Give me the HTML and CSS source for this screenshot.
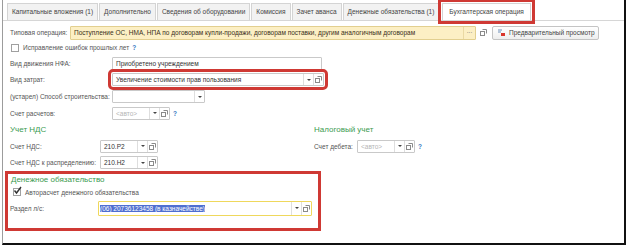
FILE: index.html
```html
<!doctype html>
<html>
  <head>
    <meta charset="UTF-8" />
    <title>Бухгалтерская операция</title>
    <link rel="stylesheet" href="styles.css">
  </head>

  <body>
    <div class="window">
      <div class="tabs">
        <div class="tab">Капитальные вложения (1)</div>
        <div class="tab">Дополнительно</div>
        <div class="tab">Сведения об оборудовании</div>
        <div class="tab">Комиссия</div>
        <div class="tab">Зачет аванса</div>
        <div class="tab">Денежные обязательства (1)</div>
        <div class="tab active">Бухгалтерская операция</div>
      </div>

      <div class="form">
        <div class="row row-op">
          <span class="label label-op">Типовая операция:</span>
          <div class="field field-yellow field-op">
            <span class="value">Поступление ОС, НМА, НПА по договорам купли-продажи, договорам поставки, другим аналогичным договорам</span>
            <span class="btn dots">...</span>
          </div>
          <span class="open-btn">
            <svg width="7" height="7" viewBox="0 0 7 7"><rect x="0.5" y="2.5" width="4" height="4" fill="none" stroke="#8a8a8a"/><path d="M2.5 0.5h4v4" fill="none" stroke="#8a8a8a"/></svg>
          </span>
          <button class="preview">
            <svg width="9" height="8" viewBox="0 0 9 8"><path d="M1 1h4M1 3h3" stroke="#6f8fb8" stroke-width="1"/><rect x="4" y="4" width="4" height="3" fill="#d9352b"/></svg>
            Предварительный просмотр
          </button>
        </div>

        <div class="row row-check">
          <span class="checkbox"></span>
          <span class="check-label">Исправление ошибок прошлых лет</span>
          <span class="help">?</span>
        </div>

        <div class="row row-3">
          <span class="label label-wide">Вид движения НФА:</span>
          <div class="field field-nfa">
            <span class="value">Приобретено учреждением</span>
          </div>
        </div>

        <div class="row row-4">
          <span class="label label-wide">Вид затрат:</span>
          <div class="field field-cost">
            <span class="value">Увеличение стоимости прав пользования</span>
            <span class="btn"><i class="arrow"></i></span>
            <span class="btn"><svg width="7" height="7" viewBox="0 0 7 7"><rect x="0.5" y="2.5" width="4" height="4" fill="none" stroke="#8a8a8a"/><path d="M2.5 0.5h4v4" fill="none" stroke="#8a8a8a"/></svg></span>
          </div>
        </div>

        <div class="row row-5">
          <span class="label label-wide">(устарел) Способ строительства:</span>
          <div class="field field-build">
            <span class="value"></span>
            <span class="btn"><i class="arrow"></i></span>
          </div>
        </div>

        <div class="row row-6">
          <span class="label label-wide">Счет расчетов:</span>
          <div class="field field-short">
            <span class="value placeholder">&lt;авто&gt;</span>
            <span class="btn"><i class="arrow"></i></span>
            <span class="btn"><svg width="7" height="7" viewBox="0 0 7 7"><rect x="0.5" y="2.5" width="4" height="4" fill="none" stroke="#8a8a8a"/><path d="M2.5 0.5h4v4" fill="none" stroke="#8a8a8a"/></svg></span>
          </div>
          <span class="help">?</span>
        </div>

        <div class="columns">
          <div class="column column-vat">
            <h3 class="group-title">Учет НДС</h3>
            <div class="row row-8">
              <span class="label label-vat">Счет НДС:</span>
              <div class="field field-short">
                <span class="value">210.Р2</span>
                <span class="btn"><i class="arrow"></i></span>
                <span class="btn"><svg width="7" height="7" viewBox="0 0 7 7"><rect x="0.5" y="2.5" width="4" height="4" fill="none" stroke="#8a8a8a"/><path d="M2.5 0.5h4v4" fill="none" stroke="#8a8a8a"/></svg></span>
              </div>
            </div>
            <div class="row row-9">
              <span class="label label-vat">Счет НДС к распределению:</span>
              <div class="field field-short">
                <span class="value">210.Н2</span>
                <span class="btn"><i class="arrow"></i></span>
                <span class="btn"><svg width="7" height="7" viewBox="0 0 7 7"><rect x="0.5" y="2.5" width="4" height="4" fill="none" stroke="#8a8a8a"/><path d="M2.5 0.5h4v4" fill="none" stroke="#8a8a8a"/></svg></span>
              </div>
            </div>
          </div>

          <div class="column column-tax">
            <h3 class="group-title">Налоговый учет</h3>
            <div class="row row-8">
              <span class="label label-tax">Счет дебета:</span>
              <div class="field field-short">
                <span class="value placeholder">&lt;авто&gt;</span>
                <span class="btn"><i class="arrow"></i></span>
                <span class="btn"><svg width="7" height="7" viewBox="0 0 7 7"><rect x="0.5" y="2.5" width="4" height="4" fill="none" stroke="#8a8a8a"/><path d="M2.5 0.5h4v4" fill="none" stroke="#8a8a8a"/></svg></span>
              </div>
              <span class="help">?</span>
            </div>
          </div>
        </div>

        <div class="money">
          <h3 class="group-title">Денежное обязательство</h3>
          <div class="row row-auto">
            <span class="checkbox checked">
              <svg width="9" height="9" viewBox="0 0 9 9"><path d="M1.5 4.5l2 2.5 4.5-6" fill="none" stroke="#333" stroke-width="1.4"/></svg>
            </span>
            <span class="check-label">Авторасчет денежного обязательства</span>
          </div>
          <div class="row row-section">
            <span class="label label-section">Раздел л/с:</span>
            <div class="field field-section">
              <span class="value"><span class="selected">(06) 20736123458 (в казначействе)</span></span>
              <span class="btn"><i class="arrow"></i></span>
              <span class="btn"><svg width="7" height="7" viewBox="0 0 7 7"><rect x="0.5" y="2.5" width="4" height="4" fill="none" stroke="#8a8a8a"/><path d="M2.5 0.5h4v4" fill="none" stroke="#8a8a8a"/></svg></span>
            </div>
          </div>
        </div>
      </div>
    </div>
  </body>
</html>
```

FILE: styles.css
```css
*,
*::before,
*::after {
  margin: 0;
  padding: 0;
  box-sizing: border-box;
}

body {
  width: 626px;
  height: 245px;
  overflow: hidden;
  background: #fff;
  font-family: "Liberation Sans", Arial, sans-serif;
  font-size: 6.5px;
  color: #555;
}

.window {
  margin-left: 2px;
  width: 624px;
  height: 245px;
  border-left: 1px solid #9c9c9c;
  border-right: 2px solid #111;
  border-bottom: 2px solid #111;
}

/* tabs */

.tabs {
  display: flex;
  gap: 1px;
  height: 21px;
  padding: 3px 0 0 4px;
  border-bottom: 1px solid #d6d6d6;
}

.tab {
  height: 17px;
  line-height: 16px;
  padding: 0 4px;
  border: 1px solid #d4d4d4;
  border-bottom: none;
  background: #f2f2f2;
  color: #444;
  white-space: nowrap;
}

.tab.active {
  margin-left: 2px;
  padding: 0 6px;
  background: #fff;
  outline: 3px solid #cf3934;
  outline-offset: 1px;
}

/* form */

.form {
  padding: 4px 0 0 7px;
}

.row {
  display: flex;
  align-items: center;
  white-space: nowrap;
}

.row-op { height: 15px; }
.row-check { height: 15px; }
.row-3 { height: 16px; }
.row-4 { height: 17px; }
.row-5 { height: 17px; }
.row-6 { height: 16px; }
.row-8 { height: 16px; }
.row-9 { height: 17px; }

.label {
  flex: none;
  color: #555;
}

.label-op { width: 60px; }
.label-wide { width: 102px; }
.label-vat { width: 90px; }
.label-tax { width: 43px; }
.label-section { width: 88px; }

.field {
  display: flex;
  height: 13px;
  border: 1px solid #c9c9c9;
  border-radius: 1px;
  background: #fff;
}

.field .value {
  flex: 1;
  overflow: hidden;
  padding: 0 3px;
  line-height: 11px;
  color: #333;
}

.field .placeholder {
  color: #b5b5b5;
}

.field .btn {
  display: flex;
  align-items: center;
  justify-content: center;
  width: 10px;
  border-left: 1px solid #dedede;
}

.arrow {
  width: 0;
  height: 0;
  border-left: 2px solid transparent;
  border-right: 2px solid transparent;
  border-top: 2px solid #444;
}

.field-yellow {
  background: #fcefc4;
  border-color: #e2cf8f;
}

.field-op {
  width: 406px;
  height: 14px;
}

.field-op .value {
  line-height: 12px;
  color: #3a3020;
}

.field-op .dots {
  width: 12px;
  border-left-color: #ead9a3;
  color: #777;
  align-items: flex-start;
  line-height: 8px;
}

.open-btn {
  display: flex;
  align-items: center;
  justify-content: center;
  width: 12px;
  height: 14px;
  margin-left: 1px;
}

.preview {
  display: flex;
  align-items: center;
  gap: 3px;
  height: 14px;
  margin-left: 3px;
  padding: 0 3px 0 4px;
  border: 1px solid #c4c4c4;
  border-radius: 2px;
  background: linear-gradient(#ffffff, #eeeeee);
  font: inherit;
  color: #444;
}

.checkbox {
  position: relative;
  flex: none;
  width: 8px;
  height: 8px;
  margin: 0 4px 0 1px;
  border: 1px solid #a0a0a0;
  background: #fff;
}

.checkbox.checked svg {
  position: absolute;
  left: -1px;
  top: -3px;
}

.check-label {
  color: #555;
}

.help {
  margin-left: 3px;
  color: #3a78c2;
  font-weight: bold;
}

.field-nfa { width: 210px; }

.field-cost {
  width: 212px;
  outline: 3px solid #cf3934;
  outline-offset: 1px;
}

.field-build { width: 93px; }

.field-short { width: 58px; }

.columns {
  display: flex;
}

.column-vat { width: 304px; }

.group-title {
  height: 17px;
  line-height: 17px;
  font-size: 8px;
  font-weight: normal;
  color: #3b9b50;
}

/* red-framed block */

.money {
  width: 316px;
  height: 60px;
  margin-left: -5px;
  padding: 0 0 0 2px;
  border: 3px solid #cf3934;
}

.money .group-title {
  height: 12px;
  line-height: 12px;
  padding-left: 1px;
}

.row-auto { height: 12px; }

.row-auto .checkbox { margin-left: 3px; }

.row-section { height: 20px; }

.field-section {
  width: 214px;
  height: 15px;
  border-color: #efd85c;
}

.field-section .value {
  padding: 0 1px;
  line-height: 13px;
}

.selected {
  background: #4f6fd0;
  color: #fff;
}
```
